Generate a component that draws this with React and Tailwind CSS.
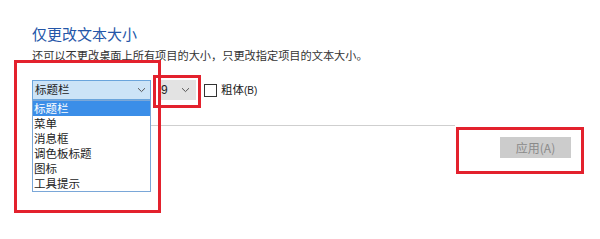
import React from 'react'

const ITEMS = ['标题栏', '菜单', '消息框', '调色板标题', '图标', '工具提示']

function Chevron() {
  return (
    <svg width="9" height="6" viewBox="0 0 9 6" className="shrink-0">
      <path d="M1 1.2 L4.5 4.6 L8 1.2" fill="none" stroke="#555" strokeWidth="1" />
    </svg>
  )
}

export default function App() {
  const font = { fontFamily: '"Noto Sans CJK SC", "Noto Sans", sans-serif' }
  return (
    <div className="relative w-[600px] h-[239px] bg-white overflow-hidden text-[#222]" style={font}>
      <div className="pl-[32px] pt-[24px]">
        <div className="text-[15px] leading-[20px] text-[#2456a8]">仅更改文本大小</div>
        <div className="mt-[3px] text-[11.2px] leading-[16px] text-[#333]">
          还可以不更改桌面上所有项目的大小，只更改指定项目的文本大小。
        </div>

        {/* controls row */}
        <div className="mt-[17px] flex items-center h-[20px]">
          <div className="w-[119px] h-[20px] flex items-center justify-between pl-[2px] pr-[4px] bg-[#cce4f7] border border-[#6aa5dc] text-[11.5px]">
            <span>标题栏</span>
            <Chevron />
          </div>
          <div className="ml-[7px] w-[38px] h-[20px] flex items-center justify-between pl-[3px] pr-[6px] bg-[#e3e3e3] text-[12px]">
            <span style={{ fontFamily: '"Liberation Sans", sans-serif' }}>9</span>
            <Chevron />
          </div>
          <div className="ml-[8px] w-[13px] h-[13px] border border-[#333] bg-white" />
          <div className="ml-[4px] text-[11.5px] flex items-baseline">
            <span>粗体</span>
            <span className="text-[10px]" style={{ fontFamily: '"Liberation Sans", sans-serif' }}>(B)</span>
          </div>
        </div>

        <div className="mt-[25px] w-[423px] h-px bg-[#cfcfcf]" />

        <div className="mt-[11px] w-[539px] flex justify-end">
          <div className="w-[71px] h-[21px] bg-[#cccccc] text-[#8a8a8a] text-[12px] flex items-center justify-center">
            应用(A)
          </div>
        </div>
      </div>

      {/* open dropdown list */}
      <div className="absolute left-[32px] top-[100px] w-[119px] h-[92px] bg-white border border-[#7aa7d8] text-[11.5px]">
        {ITEMS.map((t, i) => (
          <div
            key={t}
            className={`h-[15px] leading-[15px] pl-[1px] ${i === 0 ? 'bg-[#3b8ee8] text-white' : ''}`}
          >
            {t}
          </div>
        ))}
      </div>

      {/* red annotation boxes */}
      <div className="absolute left-[14px] top-[60px] w-[147px] h-[153px] border-[3px] border-[#e3212d]" />
      <div className="absolute left-[153px] top-[75px] w-[48px] h-[33px] border-[3px] border-[#e3212d]" />
      <div className="absolute left-[456px] top-[127px] w-[128px] h-[47px] border-[3px] border-[#e3212d]" />
    </div>
  )
}
